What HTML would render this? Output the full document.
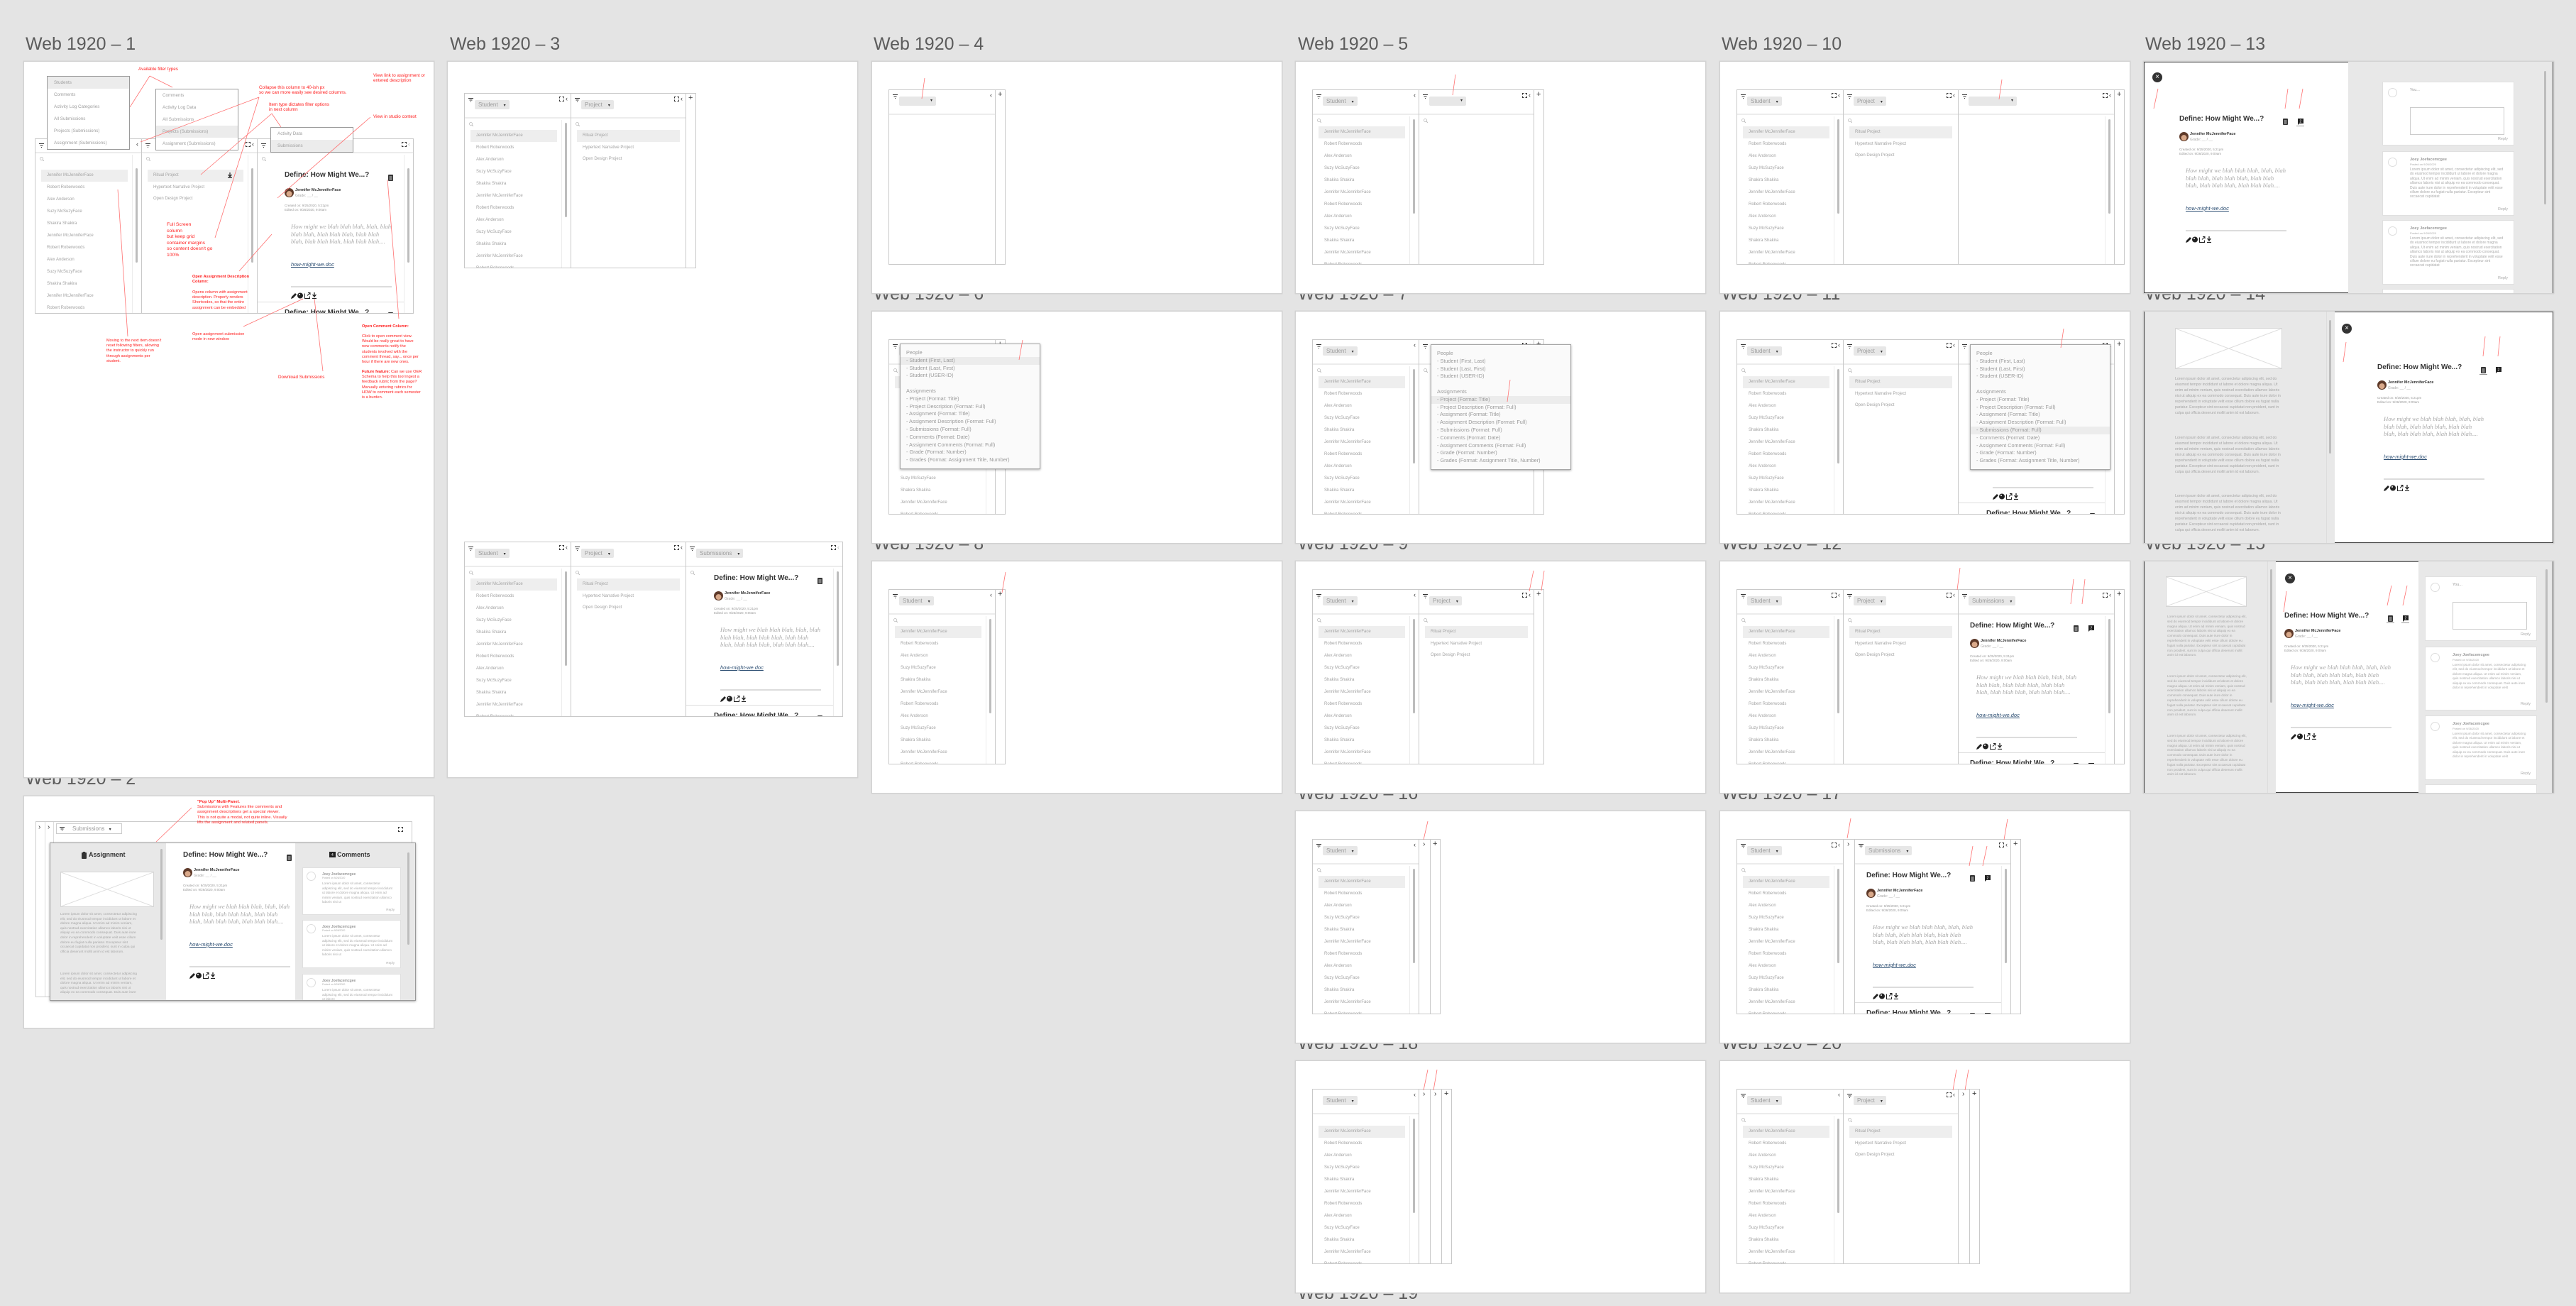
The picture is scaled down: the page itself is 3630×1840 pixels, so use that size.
<!DOCTYPE html>
<html><head><meta charset="utf-8">
<style>
*{margin:0;padding:0;box-sizing:border-box}
body{width:3630px;height:1840px;background:#e4e4e4;position:relative;overflow:hidden;font-family:"Liberation Sans",sans-serif}
.F{position:absolute;background:#fff;width:577px;height:326px;box-shadow:0 0 0 1.5px #d2d2d2;overflow:hidden}
.F.dk{box-shadow:0 0 0 1.5px #d2d2d2,inset 0 0 0 1px #444}
.lb{position:absolute;font-size:25px;color:#5c5c5c;line-height:28px;white-space:nowrap}
.W{position:absolute;left:23px;top:39px;height:247px;display:flex;border:1px solid #c9c9c9;background:#fff}
.C{position:relative;height:100%;border-right:1px solid #c9c9c9;flex:none;overflow:hidden}
.C:last-child{border-right:0}
.H{position:absolute;left:0;right:0;top:0;height:35px;border-bottom:2px solid #ececec}
.fl{position:absolute;left:5px;top:6px}
.P{position:absolute;left:14px;top:9px;height:13px;background:#e7e7e7;color:#9c9c9c;font-size:8px;line-height:13px;padding:0 5px;border-radius:2px;white-space:nowrap}
.P b{font-size:6px;color:#333;margin-left:8px;font-weight:normal}
.ri{position:absolute;right:4px;top:2px;font-size:9px;color:#333;display:flex;gap:2px;align-items:center}
.sr{position:absolute;left:6px;top:40px}
.tr{position:absolute;right:0;top:37px;bottom:0;width:13px;border-left:1px solid #ececec}
.sb{position:absolute;right:5px;top:41px;width:3px;height:133px;background:#bdbdbd;border-radius:2px}
.L{position:absolute;left:8px;right:19px;top:51px}
.i{height:17px;line-height:17px;font-size:6px;color:#a3a3a3;padding-left:8px;white-space:nowrap;overflow:hidden}
.i.s{background:#eee}
.L.p{right:8px}.L.p .i{height:16px;line-height:16px}.L.p .i.s{height:17px;line-height:17px}
.K{width:16px}.ch{position:absolute;top:1px;left:5px;font-size:10px;color:#333}
.Q{width:13px}.pl{position:absolute;top:0;left:3px;font-size:11px;color:#333}
.sm .H{height:20px}.sm .sr{top:25px}.sm .tr{top:22px}.sm .L{top:43px}
.sp{position:absolute;left:0;right:13px;top:229px;height:1px;background:#ddd}
.D{position:absolute;top:0;width:152px;height:247px}
.D>*{position:absolute}
.t{top:45px;left:0;font-weight:bold;font-size:10px;line-height:12px;color:#333;white-space:nowrap}
.d1{top:46px;left:146px}.d2{top:46px;left:167px}
.u1,.u2{top:60px;width:11px;height:1px;background:#999}.u1{left:144px}.u2{left:165px}
.av{top:69px;left:0;width:13px;height:13px;border-radius:50%;background:radial-gradient(circle at 50% 62%,#d9a98a 0 36%,#5e3a2a 40%)}
.nm{top:69px;left:15px;font-size:5.5px;font-weight:bold;color:#333;white-space:nowrap}
.gr{top:77px;left:15px;font-size:5px;color:#aaa;white-space:nowrap}
.cr{top:91px;left:0;font-size:4.5px;color:#999;white-space:nowrap;line-height:6px}
.bt{top:118px;left:9px;width:142px;font-family:"Liberation Serif",serif;font-style:italic;font-size:8.6px;line-height:10.5px;color:#a8a8a8}
.lk{top:172px;left:9px;font-size:7.5px;font-style:italic;color:#2c4e72;text-decoration:underline;white-space:nowrap}
.rl{top:207px;left:9px;width:142px;height:2px;background:#dcdcdc}
.ic{top:212px;left:9px}
.t2{top:239px}
.mn{position:absolute;background:#fff;border:1px solid #9a9a9a;width:117px}
.mn div{height:17px;line-height:17px;font-size:6.3px;color:#9f9f9f;padding-left:9px;white-space:nowrap}
.mn .h{background:#ececec}
.an{position:absolute;color:#ff2020;font-size:6.3px;line-height:7.4px}
.rd{position:absolute;left:0;top:0}
.pm{position:absolute;width:198px;height:177px;background:#fafafa;border:1px solid #a5a5a5;box-shadow:0 1px 3px rgba(0,0,0,.35);padding-top:7px;font-size:7.3px;line-height:10.8px;color:#9a9a9a}
.pm div{padding-left:8px;white-space:nowrap}
.pm .h{background:#ececec}
.gy{position:absolute;top:0;bottom:0;background:#e8e8e8}
.vb{position:absolute;width:3px;background:#bdbdbd;border-radius:2px}
.ph{position:absolute;background:#fff;border:1px solid #d5d5d5}
.ph svg{display:block;width:100%;height:100%}
.lo{position:absolute;color:#a5a5a5}
.xb{position:absolute;width:14px;height:14px;border-radius:50%;background:#333;color:#fff;font-size:10px;line-height:14px;text-align:center}
.cd{position:absolute;background:#fff;border:1px solid #e0e0e0;overflow:hidden}
.cd .cc{position:absolute;left:7px;top:8px;width:13px;height:13px;border:1px solid #ddd;border-radius:50%}
.cd .cn{position:absolute;left:38px;top:8px;font-size:5.5px;font-weight:bold;color:#999;white-space:nowrap}
.cd .cp{position:absolute;left:38px;top:15px;font-size:4px;color:#aaa;white-space:nowrap}
.cd .cx{position:absolute;left:38px;right:12px;top:22px;font-size:5px;line-height:6.4px;color:#aaa;height:52px;overflow:hidden}
.cd .rp{position:absolute;right:8px;bottom:5px;font-size:5.5px;color:#aaa}
.cd .ta{position:absolute;left:38px;top:35px;width:133px;height:39px;border:1px solid #ccc}
</style></head><body>

<!-- LABELS -->
<div class="lb" style="left:36px;top:48px">Web 1920 – 1</div>
<div class="lb" style="left:634px;top:48px">Web 1920 – 3</div>
<div class="lb" style="left:1231px;top:48px">Web 1920 – 4</div>
<div class="lb" style="left:1829px;top:48px">Web 1920 – 5</div>
<div class="lb" style="left:2426px;top:48px">Web 1920 – 10</div>
<div class="lb" style="left:3023px;top:48px">Web 1920 – 13</div>
<div class="lb" style="left:1231px;top:400px">Web 1920 – 6</div>
<div class="lb" style="left:1829px;top:400px">Web 1920 – 7</div>
<div class="lb" style="left:2426px;top:400px">Web 1920 – 11</div>
<div class="lb" style="left:3023px;top:400px">Web 1920 – 14</div>
<div class="lb" style="left:1231px;top:752px">Web 1920 – 8</div>
<div class="lb" style="left:1829px;top:752px">Web 1920 – 9</div>
<div class="lb" style="left:2426px;top:752px">Web 1920 – 12</div>
<div class="lb" style="left:3023px;top:752px">Web 1920 – 15</div>
<div class="lb" style="left:1829px;top:1104px">Web 1920 – 16</div>
<div class="lb" style="left:2426px;top:1104px">Web 1920 – 17</div>
<div class="lb" style="left:1829px;top:1456px">Web 1920 – 18</div>
<div class="lb" style="left:2426px;top:1456px">Web 1920 – 20</div>
<div class="lb" style="left:1829px;top:1808px">Web 1920 – 19</div>
<div class="lb" style="left:36px;top:1083px">Web 1920 – 2</div>

<!-- FRAME 1 -->
<div class="F" style="left:34px;top:87px;height:1008px">
 <div class="W sm" style="left:15px;top:108px">
  <div class="C" style="width:150px"><div class="H"><svg class="fl" width="7" height="6"><path d="M0 .5h7M1.5 3h4M3 5.5h1" stroke="#333"/></svg><span class="ri">‹</span></div><svg class="sr" width="6" height="6"><circle cx="2.5" cy="2.5" r="2" fill="none" stroke="#bbb" stroke-width=".8"/><path d="M4 4l2 2" stroke="#bbb"/></svg><div class="tr"></div><div class="sb"></div>
   <div class="L"><div class="i s">Jennifer McJenniferFace</div><div class="i">Robert Roberwoods</div><div class="i">Alex Anderson</div><div class="i">Suzy McSuzyFace</div><div class="i">Shakira Shakira</div><div class="i">Jennifer McJenniferFace</div><div class="i">Robert Roberwoods</div><div class="i">Alex Anderson</div><div class="i">Suzy McSuzyFace</div><div class="i">Shakira Shakira</div><div class="i">Jennifer McJenniferFace</div><div class="i">Robert Roberwoods</div></div></div>
  <div class="C" style="width:163px"><div class="H"><svg class="fl" width="7" height="6"><path d="M0 .5h7M1.5 3h4M3 5.5h1" stroke="#333"/></svg><span class="ri"><svg width="7" height="7"><path d="M.5 2.5v-2h2M4.5.5h2v2M6.5 4.5v2h-2M2.5 6.5h-2v-2" fill="none" stroke="#333"/></svg>‹</span></div><svg class="sr" width="6" height="6"><circle cx="2.5" cy="2.5" r="2" fill="none" stroke="#bbb" stroke-width=".8"/><path d="M4 4l2 2" stroke="#bbb"/></svg><div class="tr"></div><div class="sb"></div>
   <div class="L p" style="right:19px"><div class="i s">Ritual Project</div><div class="i">Hypertext Narrative Project</div><div class="i">Open Design Project</div></div>
   <svg style="position:absolute;left:121px;top:47px" width="6" height="8"><path d="M3 0v5M.5 3l2.5 3 2.5-3M0 7.5h6" fill="none" stroke="#222" stroke-width="1.2"/></svg></div>
  <div class="C" style="width:219px"><div class="H"><svg class="fl" width="7" height="6"><path d="M0 .5h7M1.5 3h4M3 5.5h1" stroke="#333"/></svg><span class="ri"><svg width="7" height="7"><path d="M.5 2.5v-2h2M4.5.5h2v2M6.5 4.5v2h-2M2.5 6.5h-2v-2" fill="none" stroke="#333"/></svg><span style="color:#bbb">‹</span></span></div><svg class="sr" width="6" height="6"><circle cx="2.5" cy="2.5" r="2" fill="none" stroke="#bbb" stroke-width=".8"/><path d="M4 4l2 2" stroke="#bbb"/></svg><div class="tr"></div><div class="sb"></div><div class="sp"></div>
   <div class="D" style="left:38px"><div class="t">Define: How Might We...?</div><div class="d1"><svg width="7" height="9"><rect width="7" height="9" rx="1" fill="#333"/><path d="M1.5 3h4M1.5 5h4M1.5 7h4" stroke="#fff" stroke-width=".7"/></svg></div><i class="av"></i><div class="nm">Jennifer McJenniferFace</div><div class="gr">Grade: __ / __</div><div class="cr">Created on: 9/25/2020, 5:21pm<br>Edited on: 9/26/2020, 9:00am</div><div class="bt">How might we blah blah blah, blah, blah blah blah, blah blah blah, blah blah blah, blah blah blah, blah blah blah....</div><div class="lk">how-might-we.doc</div><div class="rl"></div><div class="ic"><svg width="40" height="9"><path d="M0 9l1-3 5-5 2 2-5 5z" fill="#222"/><circle cx="13" cy="4.5" r="4" fill="#222"/><circle cx="12" cy="3" r="1" fill="#fff"/><path d="M19.5 1.5v7h7v-3M24 .5h3v3M27 .5l-4 4" fill="none" stroke="#222"/><path d="M33 0v5M30.5 3l2.5 3 2.5-3M30 8.5h6" fill="none" stroke="#222" stroke-width="1.3"/></svg></div><div class="t t2">Define: How Might We...?</div><div class="d1" style="top:240px"><svg width="7" height="9"><rect width="7" height="9" rx="1" fill="#333"/><path d="M1.5 3h4M1.5 5h4M1.5 7h4" stroke="#fff" stroke-width=".7"/></svg></div></div></div>
 </div>
 <div class="mn" style="left:32px;top:20px"><div class="h">Students</div><div>Comments</div><div>Activity Log Categories</div><div>All Submissions</div><div>Projects (Submissions)</div><div>Assignment (Submissions)</div></div>
 <div class="mn" style="left:185px;top:38px"><div>Comments</div><div>Activity Log Data</div><div>All Submissions</div><div class="h">Projects (Submissions)</div><div>Assignment (Submissions)</div></div>
 <div class="mn" style="left:347px;top:92px"><div>Activity Data</div><div class="h">Submissions</div></div>
 <div class="an" style="left:161px;top:7px">Available filter types</div>
 <div class="an" style="left:331px;top:33px">Collapse this column to 40-ish px<br>so we can more easily see desired columns.</div>
 <div class="an" style="left:345px;top:57px">Item type dictates filter options<br>in next column</div>
 <div class="an" style="left:492px;top:16px">View link to assignment or<br>entered description</div>
 <div class="an" style="left:492px;top:74px">View in studio context</div>
 <div class="an" style="left:201px;top:226px;font-size:6.8px;line-height:8.6px">Full Screen<br>column<br>but keep grid<br>container margins<br>so content doesn't go<br>100%</div>
 <div class="an" style="left:237px;top:300px;font-size:5.6px;line-height:7.2px"><b>Open Assignment Description<br>Column:</b></div>
 <div class="an" style="left:237px;top:322px;font-size:5.6px;line-height:7.2px">Opens column with assignment<br>description. Properly renders<br>Shortcodes, so that the entire<br>assignment can be embedded</div>
 <div class="an" style="left:237px;top:381px;font-size:5.6px;line-height:7.2px">Open assignment submission<br>mode in new window</div>
 <div class="an" style="left:116px;top:390px;font-size:5.6px;line-height:7.2px">Moving to the next item doesn't<br>reset following filters, allowing<br>the instructor to quickly run<br>through assignments per<br>student.</div>
 <div class="an" style="left:358px;top:441px">Download Submissions</div>
 <div class="an" style="left:476px;top:370px;font-size:5.6px;line-height:7.2px"><b>Open Comment Column:</b></div>
 <div class="an" style="left:476px;top:384px;font-size:5.6px;line-height:7.2px">Click to open comment view.<br>Would be really great to have<br>new comments notify the<br>students involved with the<br>comment thread, say... once per<br>hour if there are new ones.</div>
 <div class="an" style="left:476px;top:434px;font-size:5.6px;line-height:7.2px"><b>Future feature:</b> Can we use OER<br>Schema to help this tool ingest a<br>feedback rubric from the page?<br>Manually entering rubrics for<br>HOW to comment each semester<br>is a burden.</div>
 <svg class="rd" width="577" height="1008"><g stroke="#ff7070" stroke-width=".8" fill="none"><path d="M177 20L149 64M177 20L209 36M331 50L164 113M331 50L269 248M349 73L249 159M349 73L362 92M488 78L357 192M512 166L528 362M349 243L303 295M132 180L146 387M393 334L309 373M409 334L421 436"/></g></svg>
</div>

<!-- FRAME 3 -->
<div class="F" style="left:631px;top:87px;height:1008px">
 <div class="W" style="top:44px">
  <div class="C" style="width:150px"><div class="H"><svg class="fl" width="7" height="6"><path d="M0 .5h7M1.5 3h4M3 5.5h1" stroke="#333"/></svg><span class="P">Student<b>▾</b></span><span class="ri"><svg width="7" height="7"><path d="M.5 2.5v-2h2M4.5.5h2v2M6.5 4.5v2h-2M2.5 6.5h-2v-2" fill="none" stroke="#333"/></svg>‹</span></div><svg class="sr" width="6" height="6"><circle cx="2.5" cy="2.5" r="2" fill="none" stroke="#bbb" stroke-width=".8"/><path d="M4 4l2 2" stroke="#bbb"/></svg><div class="tr"></div><div class="sb"></div>
   <div class="L"><div class="i s">Jennifer McJenniferFace</div><div class="i">Robert Roberwoods</div><div class="i">Alex Anderson</div><div class="i">Suzy McSuzyFace</div><div class="i">Shakira Shakira</div><div class="i">Jennifer McJenniferFace</div><div class="i">Robert Roberwoods</div><div class="i">Alex Anderson</div><div class="i">Suzy McSuzyFace</div><div class="i">Shakira Shakira</div><div class="i">Jennifer McJenniferFace</div><div class="i">Robert Roberwoods</div></div></div>
  <div class="C" style="width:162px"><div class="H"><svg class="fl" width="7" height="6"><path d="M0 .5h7M1.5 3h4M3 5.5h1" stroke="#333"/></svg><span class="P">Project<b>▾</b></span><span class="ri"><svg width="7" height="7"><path d="M.5 2.5v-2h2M4.5.5h2v2M6.5 4.5v2h-2M2.5 6.5h-2v-2" fill="none" stroke="#333"/></svg>‹</span></div><svg class="sr" width="6" height="6"><circle cx="2.5" cy="2.5" r="2" fill="none" stroke="#bbb" stroke-width=".8"/><path d="M4 4l2 2" stroke="#bbb"/></svg>
   <div class="L p"><div class="i s">Ritual Project</div><div class="i">Hypertext Narrative Project</div><div class="i">Open Design Project</div></div></div>
  <div class="C Q"><span class="pl">+</span></div>
 </div>
 <div class="W" style="top:676px">
  <div class="C" style="width:150px"><div class="H"><svg class="fl" width="7" height="6"><path d="M0 .5h7M1.5 3h4M3 5.5h1" stroke="#333"/></svg><span class="P">Student<b>▾</b></span><span class="ri"><svg width="7" height="7"><path d="M.5 2.5v-2h2M4.5.5h2v2M6.5 4.5v2h-2M2.5 6.5h-2v-2" fill="none" stroke="#333"/></svg>‹</span></div><svg class="sr" width="6" height="6"><circle cx="2.5" cy="2.5" r="2" fill="none" stroke="#bbb" stroke-width=".8"/><path d="M4 4l2 2" stroke="#bbb"/></svg><div class="tr"></div><div class="sb"></div>
   <div class="L"><div class="i s">Jennifer McJenniferFace</div><div class="i">Robert Roberwoods</div><div class="i">Alex Anderson</div><div class="i">Suzy McSuzyFace</div><div class="i">Shakira Shakira</div><div class="i">Jennifer McJenniferFace</div><div class="i">Robert Roberwoods</div><div class="i">Alex Anderson</div><div class="i">Suzy McSuzyFace</div><div class="i">Shakira Shakira</div><div class="i">Jennifer McJenniferFace</div><div class="i">Robert Roberwoods</div></div></div>
  <div class="C" style="width:162px"><div class="H"><svg class="fl" width="7" height="6"><path d="M0 .5h7M1.5 3h4M3 5.5h1" stroke="#333"/></svg><span class="P">Project<b>▾</b></span><span class="ri"><svg width="7" height="7"><path d="M.5 2.5v-2h2M4.5.5h2v2M6.5 4.5v2h-2M2.5 6.5h-2v-2" fill="none" stroke="#333"/></svg>‹</span></div><svg class="sr" width="6" height="6"><circle cx="2.5" cy="2.5" r="2" fill="none" stroke="#bbb" stroke-width=".8"/><path d="M4 4l2 2" stroke="#bbb"/></svg>
   <div class="L p"><div class="i s">Ritual Project</div><div class="i">Hypertext Narrative Project</div><div class="i">Open Design Project</div></div></div>
  <div class="C" style="width:220px"><div class="H"><svg class="fl" width="7" height="6"><path d="M0 .5h7M1.5 3h4M3 5.5h1" stroke="#333"/></svg><span class="P">Submissions<b>▾</b></span><span class="ri"><svg width="7" height="7"><path d="M.5 2.5v-2h2M4.5.5h2v2M6.5 4.5v2h-2M2.5 6.5h-2v-2" fill="none" stroke="#333"/></svg><span style="color:#bbb">‹</span></span></div><svg class="sr" width="6" height="6"><circle cx="2.5" cy="2.5" r="2" fill="none" stroke="#bbb" stroke-width=".8"/><path d="M4 4l2 2" stroke="#bbb"/></svg><div class="tr"></div><div class="sb"></div><div class="sp"></div>
   <div class="D" style="left:39px"><div class="t">Define: How Might We...?</div><div class="d1"><svg width="7" height="9"><rect width="7" height="9" rx="1" fill="#333"/><path d="M1.5 3h4M1.5 5h4M1.5 7h4" stroke="#fff" stroke-width=".7"/></svg></div><i class="av"></i><div class="nm">Jennifer McJenniferFace</div><div class="gr">Grade: __ / __</div><div class="cr">Created on: 9/25/2020, 5:21pm<br>Edited on: 9/26/2020, 9:00am</div><div class="bt">How might we blah blah blah, blah, blah blah blah, blah blah blah, blah blah blah, blah blah blah, blah blah blah....</div><div class="lk">how-might-we.doc</div><div class="rl"></div><div class="ic"><svg width="40" height="9"><path d="M0 9l1-3 5-5 2 2-5 5z" fill="#222"/><circle cx="13" cy="4.5" r="4" fill="#222"/><circle cx="12" cy="3" r="1" fill="#fff"/><path d="M19.5 1.5v7h7v-3M24 .5h3v3M27 .5l-4 4" fill="none" stroke="#222"/><path d="M33 0v5M30.5 3l2.5 3 2.5-3M30 8.5h6" fill="none" stroke="#222" stroke-width="1.3"/></svg></div><div class="t t2">Define: How Might We...?</div><div class="d1" style="top:240px"><svg width="7" height="9"><rect width="7" height="9" rx="1" fill="#333"/><path d="M1.5 3h4M1.5 5h4M1.5 7h4" stroke="#fff" stroke-width=".7"/></svg></div></div></div>
 </div>
</div>

<!-- FRAME 4 -->
<div class="F" style="left:1229px;top:87px">
 <div class="W">
  <div class="C" style="width:150px"><div class="H"><svg class="fl" width="7" height="6"><path d="M0 .5h7M1.5 3h4M3 5.5h1" stroke="#333"/></svg><span class="P" style="width:52px">&nbsp;<b style="position:absolute;right:5px">▾</b></span><span class="ri">‹</span></div></div>
  <div class="C Q"><span class="pl">+</span></div>
 </div>
 <svg class="rd" width="577" height="326"><path d="M74 23L70 52" stroke="#ff7070" stroke-width=".8"/></svg>
</div>

<!-- FRAME 5 -->
<div class="F" style="left:1826px;top:87px">
 <div class="W">
  <div class="C" style="width:150px"><div class="H"><svg class="fl" width="7" height="6"><path d="M0 .5h7M1.5 3h4M3 5.5h1" stroke="#333"/></svg><span class="P">Student<b>▾</b></span><span class="ri">‹</span></div><svg class="sr" width="6" height="6"><circle cx="2.5" cy="2.5" r="2" fill="none" stroke="#bbb" stroke-width=".8"/><path d="M4 4l2 2" stroke="#bbb"/></svg><div class="tr"></div><div class="sb"></div>
   <div class="L"><div class="i s">Jennifer McJenniferFace</div><div class="i">Robert Roberwoods</div><div class="i">Alex Anderson</div><div class="i">Suzy McSuzyFace</div><div class="i">Shakira Shakira</div><div class="i">Jennifer McJenniferFace</div><div class="i">Robert Roberwoods</div><div class="i">Alex Anderson</div><div class="i">Suzy McSuzyFace</div><div class="i">Shakira Shakira</div><div class="i">Jennifer McJenniferFace</div><div class="i">Robert Roberwoods</div></div></div>
  <div class="C" style="width:162px"><div class="H"><svg class="fl" width="7" height="6"><path d="M0 .5h7M1.5 3h4M3 5.5h1" stroke="#333"/></svg><span class="P" style="width:52px">&nbsp;<b style="position:absolute;right:5px">▾</b></span><span class="ri"><svg width="7" height="7"><path d="M.5 2.5v-2h2M4.5.5h2v2M6.5 4.5v2h-2M2.5 6.5h-2v-2" fill="none" stroke="#333"/></svg>‹</span></div><svg class="sr" width="6" height="6"><circle cx="2.5" cy="2.5" r="2" fill="none" stroke="#bbb" stroke-width=".8"/><path d="M4 4l2 2" stroke="#bbb"/></svg></div>
  <div class="C Q"><span class="pl">+</span></div>
 </div>
 <svg class="rd" width="577" height="326"><path d="M225 18L221 47" stroke="#ff7070" stroke-width=".8"/></svg>
</div>

<!-- FRAME 10 -->
<div class="F" style="left:2424px;top:87px">
 <div class="W">
  <div class="C" style="width:150px"><div class="H"><svg class="fl" width="7" height="6"><path d="M0 .5h7M1.5 3h4M3 5.5h1" stroke="#333"/></svg><span class="P">Student<b>▾</b></span><span class="ri"><svg width="7" height="7"><path d="M.5 2.5v-2h2M4.5.5h2v2M6.5 4.5v2h-2M2.5 6.5h-2v-2" fill="none" stroke="#333"/></svg>‹</span></div><svg class="sr" width="6" height="6"><circle cx="2.5" cy="2.5" r="2" fill="none" stroke="#bbb" stroke-width=".8"/><path d="M4 4l2 2" stroke="#bbb"/></svg><div class="tr"></div><div class="sb"></div>
   <div class="L"><div class="i s">Jennifer McJenniferFace</div><div class="i">Robert Roberwoods</div><div class="i">Alex Anderson</div><div class="i">Suzy McSuzyFace</div><div class="i">Shakira Shakira</div><div class="i">Jennifer McJenniferFace</div><div class="i">Robert Roberwoods</div><div class="i">Alex Anderson</div><div class="i">Suzy McSuzyFace</div><div class="i">Shakira Shakira</div><div class="i">Jennifer McJenniferFace</div><div class="i">Robert Roberwoods</div></div></div>
  <div class="C" style="width:162px"><div class="H"><svg class="fl" width="7" height="6"><path d="M0 .5h7M1.5 3h4M3 5.5h1" stroke="#333"/></svg><span class="P">Project<b>▾</b></span><span class="ri"><svg width="7" height="7"><path d="M.5 2.5v-2h2M4.5.5h2v2M6.5 4.5v2h-2M2.5 6.5h-2v-2" fill="none" stroke="#333"/></svg>‹</span></div><svg class="sr" width="6" height="6"><circle cx="2.5" cy="2.5" r="2" fill="none" stroke="#bbb" stroke-width=".8"/><path d="M4 4l2 2" stroke="#bbb"/></svg>
   <div class="L p"><div class="i s">Ritual Project</div><div class="i">Hypertext Narrative Project</div><div class="i">Open Design Project</div></div></div>
  <div class="C" style="width:220px"><div class="H"><svg class="fl" width="7" height="6"><path d="M0 .5h7M1.5 3h4M3 5.5h1" stroke="#333"/></svg><span class="P" style="width:68px">&nbsp;<b style="position:absolute;right:5px">▾</b></span><span class="ri"><svg width="7" height="7"><path d="M.5 2.5v-2h2M4.5.5h2v2M6.5 4.5v2h-2M2.5 6.5h-2v-2" fill="none" stroke="#333"/></svg>‹</span></div><div class="tr"></div><div class="sb"></div></div>
  <div class="C Q"><span class="pl">+</span></div>
 </div>
 <svg class="rd" width="577" height="326"><path d="M397 25L393 53" stroke="#ff7070" stroke-width=".8"/></svg>
</div>

<!-- FRAME 13 -->
<div class="F dk" style="left:3021px;top:87px">
 <div class="gy" style="left:288px;right:1px"></div>
 <div class="xb" style="left:12px;top:15px">×</div>
 <div class="D" style="left:50px;top:30px"><div class="t">Define: How Might We...?</div><div class="d1"><svg width="7" height="9"><rect width="7" height="9" rx="1" fill="#333"/><path d="M1.5 3h4M1.5 5h4M1.5 7h4" stroke="#fff" stroke-width=".7"/></svg></div><div class="d2"><svg width="8" height="9"><path d="M0 0h8v7H2L0 9z" fill="#222"/><text x="2.5" y="5.5" font-size="5" fill="#fff" font-family="Liberation Sans">2</text></svg></div><div class="u2"></div><i class="av"></i><div class="nm">Jennifer McJenniferFace</div><div class="gr">Grade: __ / __</div><div class="cr">Created on: 9/25/2020, 5:21pm<br>Edited on: 9/26/2020, 9:00am</div><div class="bt">How might we blah blah blah, blah, blah blah blah, blah blah blah, blah blah blah, blah blah blah, blah blah blah....</div><div class="lk">how-might-we.doc</div><div class="rl"></div><div class="ic"><svg width="40" height="9"><path d="M0 9l1-3 5-5 2 2-5 5z" fill="#222"/><circle cx="13" cy="4.5" r="4" fill="#222"/><circle cx="12" cy="3" r="1" fill="#fff"/><path d="M19.5 1.5v7h7v-3M24 .5h3v3M27 .5l-4 4" fill="none" stroke="#222"/><path d="M33 0v5M30.5 3l2.5 3 2.5-3M30 8.5h6" fill="none" stroke="#222" stroke-width="1.3"/></svg></div></div>
 <div class="cd" style="left:336px;top:28px;width:186px;height:90px"><i class="cc"></i><span class="cn" style="font-weight:normal">You...</span><div class="ta"></div><span class="rp">Reply</span></div>
 <div class="cd" style="left:336px;top:126px;width:186px;height:91px"><i class="cc"></i><b class="cn">Joey Joefacemcgee</b><span class="cp">Posted on 9/26/2020</span><p class="cx">Lorem ipsum dolor sit amet, consectetur adipiscing elit, sed do eiusmod tempor incididunt ut labore et dolore magna aliqua. Ut enim ad minim veniam, quis nostrud exercitation ullamco laboris nisi ut aliquip ex ea commodo consequat. Duis aute irure dolor in reprehenderit in voluptate velit esse cillum dolore eu fugiat nulla pariatur. Excepteur sint occaecat cupidatat</p><span class="rp">Reply</span></div>
 <div class="cd" style="left:336px;top:223px;width:186px;height:91px"><i class="cc"></i><b class="cn">Joey Joefacemcgee</b><span class="cp">Posted on 9/26/2020</span><p class="cx">Lorem ipsum dolor sit amet, consectetur adipiscing elit, sed do eiusmod tempor incididunt ut labore et dolore magna aliqua. Ut enim ad minim veniam, quis nostrud exercitation ullamco laboris nisi ut aliquip ex ea commodo consequat. Duis aute irure dolor in reprehenderit in voluptate velit esse cillum dolore eu fugiat nulla pariatur. Excepteur sint occaecat cupidatat</p><span class="rp">Reply</span></div>
 <div class="cd" style="left:336px;top:320px;width:186px;height:20px"></div>
 <div class="vb" style="left:564px;top:13px;height:188px"></div>
 <svg class="rd" width="577" height="326"><path d="M20 38L14 66M203 38L199 66M224 38L219 66" stroke="#ff7070" stroke-width=".8"/></svg>
</div>

<!-- FRAME 6 -->
<div class="F" style="left:1229px;top:439px">
 <div class="W">
  <div class="C" style="width:150px"><div class="H"><svg class="fl" width="7" height="6"><path d="M0 .5h7M1.5 3h4M3 5.5h1" stroke="#333"/></svg><span class="P">Student<b>▾</b></span><span class="ri">‹</span></div><svg class="sr" width="6" height="6"><circle cx="2.5" cy="2.5" r="2" fill="none" stroke="#bbb" stroke-width=".8"/><path d="M4 4l2 2" stroke="#bbb"/></svg><div class="tr"></div><div class="sb"></div>
   <div class="L"><div class="i s">Jennifer McJenniferFace</div><div class="i">Robert Roberwoods</div><div class="i">Alex Anderson</div><div class="i">Suzy McSuzyFace</div><div class="i">Shakira Shakira</div><div class="i">Jennifer McJenniferFace</div><div class="i">Robert Roberwoods</div><div class="i">Alex Anderson</div><div class="i">Suzy McSuzyFace</div><div class="i">Shakira Shakira</div><div class="i">Jennifer McJenniferFace</div><div class="i">Robert Roberwoods</div></div></div>
  <div class="C Q"><span class="pl">+</span></div>
 </div>
 <div class="pm" style="left:39px;top:45px"><div>People</div><div class="h">- Student (First, Last)</div><div>- Student (Last, First)</div><div>- Student (USER-ID)</div><div>&nbsp;</div><div>Assignments</div><div>- Project (Format: Title)</div><div>- Project Description (Format: Full)</div><div>- Assignment (Format: Title)</div><div>- Assignment Description (Format: Full)</div><div>- Submissions (Format: Full)</div><div>- Comments (Format: Date)</div><div>- Assignment Comments (Format: Full)</div><div>- Grade (Format: Number)</div><div>- Grades (Format: Assignment Title, Number)</div></div>
 <svg class="rd" width="577" height="326"><path d="M212 40L207 68" stroke="#ff7070" stroke-width=".8"/></svg>
</div>

<!-- FRAME 7 -->
<div class="F" style="left:1826px;top:439px">
 <div class="W">
  <div class="C" style="width:150px"><div class="H"><svg class="fl" width="7" height="6"><path d="M0 .5h7M1.5 3h4M3 5.5h1" stroke="#333"/></svg><span class="P">Student<b>▾</b></span><span class="ri">‹</span></div><svg class="sr" width="6" height="6"><circle cx="2.5" cy="2.5" r="2" fill="none" stroke="#bbb" stroke-width=".8"/><path d="M4 4l2 2" stroke="#bbb"/></svg><div class="tr"></div><div class="sb"></div>
   <div class="L"><div class="i s">Jennifer McJenniferFace</div><div class="i">Robert Roberwoods</div><div class="i">Alex Anderson</div><div class="i">Suzy McSuzyFace</div><div class="i">Shakira Shakira</div><div class="i">Jennifer McJenniferFace</div><div class="i">Robert Roberwoods</div><div class="i">Alex Anderson</div><div class="i">Suzy McSuzyFace</div><div class="i">Shakira Shakira</div><div class="i">Jennifer McJenniferFace</div><div class="i">Robert Roberwoods</div></div></div>
  <div class="C" style="width:162px"><div class="H"><svg class="fl" width="7" height="6"><path d="M0 .5h7M1.5 3h4M3 5.5h1" stroke="#333"/></svg><span class="ri"><svg width="7" height="7"><path d="M.5 2.5v-2h2M4.5.5h2v2M6.5 4.5v2h-2M2.5 6.5h-2v-2" fill="none" stroke="#333"/></svg>‹</span></div><svg class="sr" width="6" height="6"><circle cx="2.5" cy="2.5" r="2" fill="none" stroke="#bbb" stroke-width=".8"/><path d="M4 4l2 2" stroke="#bbb"/></svg></div>
  <div class="C Q"><span class="pl">+</span></div>
 </div>
 <div class="pm" style="left:190px;top:46px"><div>People</div><div>- Student (First, Last)</div><div>- Student (Last, First)</div><div>- Student (USER-ID)</div><div>&nbsp;</div><div>Assignments</div><div class="h">- Project (Format: Title)</div><div>- Project Description (Format: Full)</div><div>- Assignment (Format: Title)</div><div>- Assignment Description (Format: Full)</div><div>- Submissions (Format: Full)</div><div>- Comments (Format: Date)</div><div>- Assignment Comments (Format: Full)</div><div>- Grade (Format: Number)</div><div>- Grades (Format: Assignment Title, Number)</div></div>
 <svg class="rd" width="577" height="326"><path d="M302 96L298 127" stroke="#ff7070" stroke-width=".8"/></svg>
</div>

<!-- FRAME 11 -->
<div class="F" style="left:2424px;top:439px">
 <div class="W">
  <div class="C" style="width:150px"><div class="H"><svg class="fl" width="7" height="6"><path d="M0 .5h7M1.5 3h4M3 5.5h1" stroke="#333"/></svg><span class="P">Student<b>▾</b></span><span class="ri"><svg width="7" height="7"><path d="M.5 2.5v-2h2M4.5.5h2v2M6.5 4.5v2h-2M2.5 6.5h-2v-2" fill="none" stroke="#333"/></svg>‹</span></div><svg class="sr" width="6" height="6"><circle cx="2.5" cy="2.5" r="2" fill="none" stroke="#bbb" stroke-width=".8"/><path d="M4 4l2 2" stroke="#bbb"/></svg><div class="tr"></div><div class="sb"></div>
   <div class="L"><div class="i s">Jennifer McJenniferFace</div><div class="i">Robert Roberwoods</div><div class="i">Alex Anderson</div><div class="i">Suzy McSuzyFace</div><div class="i">Shakira Shakira</div><div class="i">Jennifer McJenniferFace</div><div class="i">Robert Roberwoods</div><div class="i">Alex Anderson</div><div class="i">Suzy McSuzyFace</div><div class="i">Shakira Shakira</div><div class="i">Jennifer McJenniferFace</div><div class="i">Robert Roberwoods</div></div></div>
  <div class="C" style="width:162px"><div class="H"><svg class="fl" width="7" height="6"><path d="M0 .5h7M1.5 3h4M3 5.5h1" stroke="#333"/></svg><span class="P">Project<b>▾</b></span><span class="ri"><svg width="7" height="7"><path d="M.5 2.5v-2h2M4.5.5h2v2M6.5 4.5v2h-2M2.5 6.5h-2v-2" fill="none" stroke="#333"/></svg>‹</span></div><svg class="sr" width="6" height="6"><circle cx="2.5" cy="2.5" r="2" fill="none" stroke="#bbb" stroke-width=".8"/><path d="M4 4l2 2" stroke="#bbb"/></svg>
   <div class="L p"><div class="i s">Ritual Project</div><div class="i">Hypertext Narrative Project</div><div class="i">Open Design Project</div></div></div>
  <div class="C" style="width:220px"><div class="H"><svg class="fl" width="7" height="6"><path d="M0 .5h7M1.5 3h4M3 5.5h1" stroke="#333"/></svg><span class="ri"><svg width="7" height="7"><path d="M.5 2.5v-2h2M4.5.5h2v2M6.5 4.5v2h-2M2.5 6.5h-2v-2" fill="none" stroke="#333"/></svg>‹</span></div><div class="tr"></div><div class="sb"></div><div class="sp"></div>
   <div class="D" style="left:39px"><div class="t">Define: How Might We...?</div><i class="av"></i><div class="bt">How might we blah blah blah, blah, blah blah blah, blah blah blah, blah blah blah, blah blah blah, blah blah blah....</div><div class="lk">how-might-we.doc</div><div class="rl"></div><div class="ic"><svg width="40" height="9"><path d="M0 9l1-3 5-5 2 2-5 5z" fill="#222"/><circle cx="13" cy="4.5" r="4" fill="#222"/><circle cx="12" cy="3" r="1" fill="#fff"/><path d="M19.5 1.5v7h7v-3M24 .5h3v3M27 .5l-4 4" fill="none" stroke="#222"/><path d="M33 0v5M30.5 3l2.5 3 2.5-3M30 8.5h6" fill="none" stroke="#222" stroke-width="1.3"/></svg></div><div class="t t2">Define: How Might We...?</div><div class="d1" style="top:240px"><svg width="7" height="9"><rect width="7" height="9" rx="1" fill="#333"/><path d="M1.5 3h4M1.5 5h4M1.5 7h4" stroke="#fff" stroke-width=".7"/></svg></div></div></div>
  <div class="C Q"><span class="pl">+</span></div>
 </div>
 <div class="pm" style="left:352px;top:46px"><div>People</div><div>- Student (First, Last)</div><div>- Student (Last, First)</div><div>- Student (USER-ID)</div><div>&nbsp;</div><div>Assignments</div><div>- Project (Format: Title)</div><div>- Project Description (Format: Full)</div><div>- Assignment (Format: Title)</div><div>- Assignment Description (Format: Full)</div><div class="h">- Submissions (Format: Full)</div><div>- Comments (Format: Date)</div><div>- Assignment Comments (Format: Full)</div><div>- Grade (Format: Number)</div><div>- Grades (Format: Assignment Title, Number)</div></div>
 <svg class="rd" width="577" height="326"><path d="M484 24L480 51" stroke="#ff7070" stroke-width=".8"/></svg>
</div>

<!-- FRAME 14 -->
<div class="F dk" style="left:3021px;top:439px">
 <div class="gy" style="left:1px;width:268px"></div>
 <div style="position:absolute;left:257px;top:0;bottom:0;width:1px;background:#ddd"></div>
 <div class="vb" style="left:261px;top:12px;height:188px"></div>
 <div class="ph" style="left:44px;top:23px;width:151px;height:58px"><svg viewBox="0 0 100 100" preserveAspectRatio="none"><path d="M0 0L100 100M100 0L0 100" stroke="#ddd" vector-effect="non-scaling-stroke" fill="none"/></svg></div>
 <p class="lo" style="left:44px;top:91px;width:151px;font-size:5.2px;line-height:8px">Lorem ipsum dolor sit amet, consectetur adipiscing elit, sed do eiusmod tempor incididunt ut labore et dolore magna aliqua. Ut enim ad minim veniam, quis nostrud exercitation ullamco laboris nisi ut aliquip ex ea commodo consequat. Duis aute irure dolor in reprehenderit in voluptate velit esse cillum dolore eu fugiat nulla pariatur. Excepteur sint occaecat cupidatat non proident, sunt in culpa qui officia deserunt mollit anim id est laborum.</p>
 <p class="lo" style="left:44px;top:174px;width:151px;font-size:5.2px;line-height:8px">Lorem ipsum dolor sit amet, consectetur adipiscing elit, sed do eiusmod tempor incididunt ut labore et dolore magna aliqua. Ut enim ad minim veniam, quis nostrud exercitation ullamco laboris nisi ut aliquip ex ea commodo consequat. Duis aute irure dolor in reprehenderit in voluptate velit esse cillum dolore eu fugiat nulla pariatur. Excepteur sint occaecat cupidatat non proident, sunt in culpa qui officia deserunt mollit anim id est laborum.</p>
 <p class="lo" style="left:44px;top:256px;width:151px;font-size:5.2px;line-height:8px">Lorem ipsum dolor sit amet, consectetur adipiscing elit, sed do eiusmod tempor incididunt ut labore et dolore magna aliqua. Ut enim ad minim veniam, quis nostrud exercitation ullamco laboris nisi ut aliquip ex ea commodo consequat. Duis aute irure dolor in reprehenderit in voluptate velit esse cillum dolore eu fugiat nulla pariatur. Excepteur sint occaecat cupidatat non proident, sunt in culpa qui officia deserunt mollit anim id est laborum.</p>
 <div class="xb" style="left:279px;top:17px">×</div>
 <div class="D" style="left:329px;top:28px"><div class="t">Define: How Might We...?</div><div class="d1"><svg width="7" height="9"><rect width="7" height="9" rx="1" fill="#333"/><path d="M1.5 3h4M1.5 5h4M1.5 7h4" stroke="#fff" stroke-width=".7"/></svg></div><div class="u1"></div><div class="d2"><svg width="8" height="9"><path d="M0 0h8v7H2L0 9z" fill="#222"/><text x="2.5" y="5.5" font-size="5" fill="#fff" font-family="Liberation Sans">2</text></svg></div><i class="av"></i><div class="nm">Jennifer McJenniferFace</div><div class="gr">Grade: __ / __</div><div class="cr">Created on: 9/25/2020, 5:21pm<br>Edited on: 9/26/2020, 9:00am</div><div class="bt">How might we blah blah blah, blah, blah blah blah, blah blah blah, blah blah blah, blah blah blah, blah blah blah....</div><div class="lk">how-might-we.doc</div><div class="rl"></div><div class="ic"><svg width="40" height="9"><path d="M0 9l1-3 5-5 2 2-5 5z" fill="#222"/><circle cx="13" cy="4.5" r="4" fill="#222"/><circle cx="12" cy="3" r="1" fill="#fff"/><path d="M19.5 1.5v7h7v-3M24 .5h3v3M27 .5l-4 4" fill="none" stroke="#222"/><path d="M33 0v5M30.5 3l2.5 3 2.5-3M30 8.5h6" fill="none" stroke="#222" stroke-width="1.3"/></svg></div></div>
 <svg class="rd" width="577" height="326"><path d="M285 43L281 71M481 35L478 63M502 35L499 63" stroke="#ff7070" stroke-width=".8"/></svg>
</div>

<!-- FRAME 8 -->
<div class="F" style="left:1229px;top:791px">
 <div class="W">
  <div class="C" style="width:150px"><div class="H"><svg class="fl" width="7" height="6"><path d="M0 .5h7M1.5 3h4M3 5.5h1" stroke="#333"/></svg><span class="P">Student<b>▾</b></span><span class="ri">‹</span></div><svg class="sr" width="6" height="6"><circle cx="2.5" cy="2.5" r="2" fill="none" stroke="#bbb" stroke-width=".8"/><path d="M4 4l2 2" stroke="#bbb"/></svg><div class="tr"></div><div class="sb"></div>
   <div class="L"><div class="i s">Jennifer McJenniferFace</div><div class="i">Robert Roberwoods</div><div class="i">Alex Anderson</div><div class="i">Suzy McSuzyFace</div><div class="i">Shakira Shakira</div><div class="i">Jennifer McJenniferFace</div><div class="i">Robert Roberwoods</div><div class="i">Alex Anderson</div><div class="i">Suzy McSuzyFace</div><div class="i">Shakira Shakira</div><div class="i">Jennifer McJenniferFace</div><div class="i">Robert Roberwoods</div></div></div>
  <div class="C Q"><span class="pl">+</span></div>
 </div>
 <svg class="rd" width="577" height="326"><path d="M188 15L183 44" stroke="#ff7070" stroke-width=".8"/></svg>
</div>

<!-- FRAME 9 -->
<div class="F" style="left:1826px;top:791px">
 <div class="W">
  <div class="C" style="width:150px"><div class="H"><svg class="fl" width="7" height="6"><path d="M0 .5h7M1.5 3h4M3 5.5h1" stroke="#333"/></svg><span class="P">Student<b>▾</b></span><span class="ri">‹</span></div><svg class="sr" width="6" height="6"><circle cx="2.5" cy="2.5" r="2" fill="none" stroke="#bbb" stroke-width=".8"/><path d="M4 4l2 2" stroke="#bbb"/></svg><div class="tr"></div><div class="sb"></div>
   <div class="L"><div class="i s">Jennifer McJenniferFace</div><div class="i">Robert Roberwoods</div><div class="i">Alex Anderson</div><div class="i">Suzy McSuzyFace</div><div class="i">Shakira Shakira</div><div class="i">Jennifer McJenniferFace</div><div class="i">Robert Roberwoods</div><div class="i">Alex Anderson</div><div class="i">Suzy McSuzyFace</div><div class="i">Shakira Shakira</div><div class="i">Jennifer McJenniferFace</div><div class="i">Robert Roberwoods</div></div></div>
  <div class="C" style="width:162px"><div class="H"><svg class="fl" width="7" height="6"><path d="M0 .5h7M1.5 3h4M3 5.5h1" stroke="#333"/></svg><span class="P">Project<b>▾</b></span><span class="ri"><svg width="7" height="7"><path d="M.5 2.5v-2h2M4.5.5h2v2M6.5 4.5v2h-2M2.5 6.5h-2v-2" fill="none" stroke="#333"/></svg>‹</span></div><svg class="sr" width="6" height="6"><circle cx="2.5" cy="2.5" r="2" fill="none" stroke="#bbb" stroke-width=".8"/><path d="M4 4l2 2" stroke="#bbb"/></svg>
   <div class="L p"><div class="i s">Ritual Project</div><div class="i">Hypertext Narrative Project</div><div class="i">Open Design Project</div></div></div>
  <div class="C Q"><span class="pl">+</span></div>
 </div>
 <svg class="rd" width="577" height="326"><path d="M335 13L329 42M350 13L346 41" stroke="#ff7070" stroke-width=".8"/></svg>
</div>

<!-- FRAME 12 -->
<div class="F" style="left:2424px;top:791px">
 <div class="W">
  <div class="C" style="width:150px"><div class="H"><svg class="fl" width="7" height="6"><path d="M0 .5h7M1.5 3h4M3 5.5h1" stroke="#333"/></svg><span class="P">Student<b>▾</b></span><span class="ri"><svg width="7" height="7"><path d="M.5 2.5v-2h2M4.5.5h2v2M6.5 4.5v2h-2M2.5 6.5h-2v-2" fill="none" stroke="#333"/></svg>‹</span></div><svg class="sr" width="6" height="6"><circle cx="2.5" cy="2.5" r="2" fill="none" stroke="#bbb" stroke-width=".8"/><path d="M4 4l2 2" stroke="#bbb"/></svg><div class="tr"></div><div class="sb"></div>
   <div class="L"><div class="i s">Jennifer McJenniferFace</div><div class="i">Robert Roberwoods</div><div class="i">Alex Anderson</div><div class="i">Suzy McSuzyFace</div><div class="i">Shakira Shakira</div><div class="i">Jennifer McJenniferFace</div><div class="i">Robert Roberwoods</div><div class="i">Alex Anderson</div><div class="i">Suzy McSuzyFace</div><div class="i">Shakira Shakira</div><div class="i">Jennifer McJenniferFace</div><div class="i">Robert Roberwoods</div></div></div>
  <div class="C" style="width:162px"><div class="H"><svg class="fl" width="7" height="6"><path d="M0 .5h7M1.5 3h4M3 5.5h1" stroke="#333"/></svg><span class="P">Project<b>▾</b></span><span class="ri"><svg width="7" height="7"><path d="M.5 2.5v-2h2M4.5.5h2v2M6.5 4.5v2h-2M2.5 6.5h-2v-2" fill="none" stroke="#333"/></svg>‹</span></div><svg class="sr" width="6" height="6"><circle cx="2.5" cy="2.5" r="2" fill="none" stroke="#bbb" stroke-width=".8"/><path d="M4 4l2 2" stroke="#bbb"/></svg>
   <div class="L p"><div class="i s">Ritual Project</div><div class="i">Hypertext Narrative Project</div><div class="i">Open Design Project</div></div></div>
  <div class="C" style="width:220px"><div class="H"><svg class="fl" width="7" height="6"><path d="M0 .5h7M1.5 3h4M3 5.5h1" stroke="#333"/></svg><span class="P">Submissions<b>▾</b></span><span class="ri"><svg width="7" height="7"><path d="M.5 2.5v-2h2M4.5.5h2v2M6.5 4.5v2h-2M2.5 6.5h-2v-2" fill="none" stroke="#333"/></svg>‹</span></div><div class="tr"></div><div class="sb"></div><div class="sp"></div>
   <div class="D" style="left:16px"><div class="t">Define: How Might We...?</div><div class="d1"><svg width="7" height="9"><rect width="7" height="9" rx="1" fill="#333"/><path d="M1.5 3h4M1.5 5h4M1.5 7h4" stroke="#fff" stroke-width=".7"/></svg></div><div class="d2"><svg width="8" height="9"><path d="M0 0h8v7H2L0 9z" fill="#222"/><text x="2.5" y="5.5" font-size="5" fill="#fff" font-family="Liberation Sans">2</text></svg></div><i class="av"></i><div class="nm">Jennifer McJenniferFace</div><div class="gr">Grade: __ / __</div><div class="cr">Created on: 9/25/2020, 5:21pm<br>Edited on: 9/26/2020, 9:00am</div><div class="bt">How might we blah blah blah, blah, blah blah blah, blah blah blah, blah blah blah, blah blah blah, blah blah blah....</div><div class="lk">how-might-we.doc</div><div class="rl"></div><div class="ic"><svg width="40" height="9"><path d="M0 9l1-3 5-5 2 2-5 5z" fill="#222"/><circle cx="13" cy="4.5" r="4" fill="#222"/><circle cx="12" cy="3" r="1" fill="#fff"/><path d="M19.5 1.5v7h7v-3M24 .5h3v3M27 .5l-4 4" fill="none" stroke="#222"/><path d="M33 0v5M30.5 3l2.5 3 2.5-3M30 8.5h6" fill="none" stroke="#222" stroke-width="1.3"/></svg></div><div class="t t2">Define: How Might We...?</div><div class="d1" style="top:240px"><svg width="7" height="9"><rect width="7" height="9" rx="1" fill="#333"/><path d="M1.5 3h4M1.5 5h4M1.5 7h4" stroke="#fff" stroke-width=".7"/></svg></div><div class="d2" style="top:240px"><svg width="8" height="9"><path d="M0 0h8v7H2L0 9z" fill="#222"/></svg></div></div></div>
  <div class="C Q"><span class="pl">+</span></div>
 </div>
 <svg class="rd" width="577" height="326"><path d="M338 9L334 40M498 25L494 60M514 25L510 60" stroke="#ff7070" stroke-width=".8"/></svg>
</div>

<!-- FRAME 15 -->
<div class="F dk" style="left:3021px;top:791px">
 <div class="gy" style="left:1px;width:185px"></div>
 <div class="gy" style="left:387px;right:1px"></div>
 <div style="position:absolute;left:174px;top:0;bottom:0;width:1px;background:#ddd"></div>
 <div class="vb" style="left:178px;top:11px;height:188px"></div>
 <div class="vb" style="left:566px;top:11px;height:188px"></div>
 <div class="ph" style="left:31px;top:21px;width:114px;height:43px"><svg viewBox="0 0 100 100" preserveAspectRatio="none"><path d="M0 0L100 100M100 0L0 100" stroke="#ddd" vector-effect="non-scaling-stroke" fill="none"/></svg></div>
 <p class="lo" style="left:33px;top:75px;width:112px;font-size:4.6px;line-height:6.8px">Lorem ipsum dolor sit amet, consectetur adipiscing elit, sed do eiusmod tempor incididunt ut labore et dolore magna aliqua. Ut enim ad minim veniam, quis nostrud exercitation ullamco laboris nisi ut aliquip ex ea commodo consequat. Duis aute irure dolor in reprehenderit in voluptate velit esse cillum dolore eu fugiat nulla pariatur. Excepteur sint occaecat cupidatat non proident, sunt in culpa qui officia deserunt mollit anim id est laborum.</p>
 <p class="lo" style="left:33px;top:159px;width:112px;font-size:4.6px;line-height:6.8px">Lorem ipsum dolor sit amet, consectetur adipiscing elit, sed do eiusmod tempor incididunt ut labore et dolore magna aliqua. Ut enim ad minim veniam, quis nostrud exercitation ullamco laboris nisi ut aliquip ex ea commodo consequat. Duis aute irure dolor in reprehenderit in voluptate velit esse cillum dolore eu fugiat nulla pariatur. Excepteur sint occaecat cupidatat non proident, sunt in culpa qui officia deserunt mollit anim id est laborum.</p>
 <p class="lo" style="left:33px;top:243px;width:112px;font-size:4.6px;line-height:6.8px">Lorem ipsum dolor sit amet, consectetur adipiscing elit, sed do eiusmod tempor incididunt ut labore et dolore magna aliqua. Ut enim ad minim veniam, quis nostrud exercitation ullamco laboris nisi ut aliquip ex ea commodo consequat. Duis aute irure dolor in reprehenderit in voluptate velit esse cillum dolore eu fugiat nulla pariatur. Excepteur sint occaecat cupidatat non proident, sunt in culpa qui officia deserunt mollit anim id est laborum.</p>
 <div class="xb" style="left:199px;top:17px">×</div>
 <div class="D" style="left:198px;top:26px"><div class="t">Define: How Might We...?</div><div class="d1"><svg width="7" height="9"><rect width="7" height="9" rx="1" fill="#333"/><path d="M1.5 3h4M1.5 5h4M1.5 7h4" stroke="#fff" stroke-width=".7"/></svg></div><div class="u1"></div><div class="d2"><svg width="8" height="9"><path d="M0 0h8v7H2L0 9z" fill="#222"/><text x="2.5" y="5.5" font-size="5" fill="#fff" font-family="Liberation Sans">2</text></svg></div><div class="u2"></div><i class="av"></i><div class="nm">Jennifer McJenniferFace</div><div class="gr">Grade: __ / __</div><div class="cr">Created on: 9/25/2020, 5:21pm<br>Edited on: 9/26/2020, 9:00am</div><div class="bt">How might we blah blah blah, blah, blah blah blah, blah blah blah, blah blah blah, blah blah blah, blah blah blah....</div><div class="lk">how-might-we.doc</div><div class="rl"></div><div class="ic"><svg width="40" height="9"><path d="M0 9l1-3 5-5 2 2-5 5z" fill="#222"/><circle cx="13" cy="4.5" r="4" fill="#222"/><circle cx="12" cy="3" r="1" fill="#fff"/><path d="M19.5 1.5v7h7v-3M24 .5h3v3M27 .5l-4 4" fill="none" stroke="#222"/><path d="M33 0v5M30.5 3l2.5 3 2.5-3M30 8.5h6" fill="none" stroke="#222" stroke-width="1.3"/></svg></div></div>
 <div class="cd" style="left:396px;top:21px;width:158px;height:91px"><i class="cc"></i><span class="cn" style="font-weight:normal">You...</span><div class="ta" style="width:105px"></div><span class="rp">Reply</span></div>
 <div class="cd" style="left:396px;top:120px;width:158px;height:90px"><i class="cc"></i><b class="cn">Joey Joefacemcgee</b><span class="cp">Posted on 9/26/2020</span><p class="cx" style="font-size:4.6px">Lorem ipsum dolor sit amet, consectetur adipiscing elit, sed do eiusmod tempor incididunt ut labore et dolore magna aliqua. Ut enim ad minim veniam, quis nostrud exercitation ullamco laboris nisi ut aliquip ex ea commodo consequat. Duis aute irure dolor in reprehenderit in voluptate velit</p><span class="rp">Reply</span></div>
 <div class="cd" style="left:396px;top:217px;width:158px;height:91px"><i class="cc"></i><b class="cn">Joey Joefacemcgee</b><span class="cp">Posted on 9/26/2020</span><p class="cx" style="font-size:4.6px">Lorem ipsum dolor sit amet, consectetur adipiscing elit, sed do eiusmod tempor incididunt ut labore et dolore magna aliqua. Ut enim ad minim veniam, quis nostrud exercitation ullamco laboris nisi ut aliquip ex ea commodo consequat. Duis aute irure dolor in reprehenderit in voluptate velit</p><span class="rp">Reply</span></div>
 <div class="cd" style="left:396px;top:314px;width:158px;height:20px"></div>
 <svg class="rd" width="577" height="326"><path d="M201 42L197 71M349 34L343 62M371 34L365 62" stroke="#ff7070" stroke-width=".8"/></svg>
</div>

<!-- FRAME 16 -->
<div class="F" style="left:1826px;top:1143px">
 <div class="W">
  <div class="C" style="width:150px"><div class="H"><svg class="fl" width="7" height="6"><path d="M0 .5h7M1.5 3h4M3 5.5h1" stroke="#333"/></svg><span class="P">Student<b>▾</b></span><span class="ri">‹</span></div><svg class="sr" width="6" height="6"><circle cx="2.5" cy="2.5" r="2" fill="none" stroke="#bbb" stroke-width=".8"/><path d="M4 4l2 2" stroke="#bbb"/></svg><div class="tr"></div><div class="sb"></div>
   <div class="L"><div class="i s">Jennifer McJenniferFace</div><div class="i">Robert Roberwoods</div><div class="i">Alex Anderson</div><div class="i">Suzy McSuzyFace</div><div class="i">Shakira Shakira</div><div class="i">Jennifer McJenniferFace</div><div class="i">Robert Roberwoods</div><div class="i">Alex Anderson</div><div class="i">Suzy McSuzyFace</div><div class="i">Shakira Shakira</div><div class="i">Jennifer McJenniferFace</div><div class="i">Robert Roberwoods</div></div></div>
  <div class="C K"><span class="ch">›</span></div>
  <div class="C Q"><span class="pl">+</span></div>
 </div>
 <svg class="rd" width="577" height="326"><path d="M186 14L180 40" stroke="#ff7070" stroke-width=".8"/></svg>
</div>

<!-- FRAME 17 -->
<div class="F" style="left:2424px;top:1143px">
 <div class="W">
  <div class="C" style="width:150px"><div class="H"><svg class="fl" width="7" height="6"><path d="M0 .5h7M1.5 3h4M3 5.5h1" stroke="#333"/></svg><span class="P">Student<b>▾</b></span><span class="ri"><svg width="7" height="7"><path d="M.5 2.5v-2h2M4.5.5h2v2M6.5 4.5v2h-2M2.5 6.5h-2v-2" fill="none" stroke="#333"/></svg>‹</span></div><svg class="sr" width="6" height="6"><circle cx="2.5" cy="2.5" r="2" fill="none" stroke="#bbb" stroke-width=".8"/><path d="M4 4l2 2" stroke="#bbb"/></svg><div class="tr"></div><div class="sb"></div>
   <div class="L"><div class="i s">Jennifer McJenniferFace</div><div class="i">Robert Roberwoods</div><div class="i">Alex Anderson</div><div class="i">Suzy McSuzyFace</div><div class="i">Shakira Shakira</div><div class="i">Jennifer McJenniferFace</div><div class="i">Robert Roberwoods</div><div class="i">Alex Anderson</div><div class="i">Suzy McSuzyFace</div><div class="i">Shakira Shakira</div><div class="i">Jennifer McJenniferFace</div><div class="i">Robert Roberwoods</div></div></div>
  <div class="C K"><span class="ch">›</span></div>
  <div class="C" style="width:220px"><div class="H"><svg class="fl" width="7" height="6"><path d="M0 .5h7M1.5 3h4M3 5.5h1" stroke="#333"/></svg><span class="P">Submissions<b>▾</b></span><span class="ri"><svg width="7" height="7"><path d="M.5 2.5v-2h2M4.5.5h2v2M6.5 4.5v2h-2M2.5 6.5h-2v-2" fill="none" stroke="#333"/></svg>‹</span></div><div class="tr"></div><div class="sb"></div><div class="sp"></div>
   <div class="D" style="left:16px"><div class="t">Define: How Might We...?</div><div class="d1"><svg width="7" height="9"><rect width="7" height="9" rx="1" fill="#333"/><path d="M1.5 3h4M1.5 5h4M1.5 7h4" stroke="#fff" stroke-width=".7"/></svg></div><div class="d2"><svg width="8" height="9"><path d="M0 0h8v7H2L0 9z" fill="#222"/><text x="2.5" y="5.5" font-size="5" fill="#fff" font-family="Liberation Sans">2</text></svg></div><i class="av"></i><div class="nm">Jennifer McJenniferFace</div><div class="gr">Grade: __ / __</div><div class="cr">Created on: 9/25/2020, 5:21pm<br>Edited on: 9/26/2020, 9:00am</div><div class="bt">How might we blah blah blah, blah, blah blah blah, blah blah blah, blah blah blah, blah blah blah, blah blah blah....</div><div class="lk">how-might-we.doc</div><div class="rl"></div><div class="ic"><svg width="40" height="9"><path d="M0 9l1-3 5-5 2 2-5 5z" fill="#222"/><circle cx="13" cy="4.5" r="4" fill="#222"/><circle cx="12" cy="3" r="1" fill="#fff"/><path d="M19.5 1.5v7h7v-3M24 .5h3v3M27 .5l-4 4" fill="none" stroke="#222"/><path d="M33 0v5M30.5 3l2.5 3 2.5-3M30 8.5h6" fill="none" stroke="#222" stroke-width="1.3"/></svg></div><div class="t t2">Define: How Might We...?</div><div class="d1" style="top:240px"><svg width="7" height="9"><rect width="7" height="9" rx="1" fill="#333"/></svg></div><div class="d2" style="top:240px"><svg width="8" height="9"><path d="M0 0h8v7H2L0 9z" fill="#222"/></svg></div></div></div>
  <div class="C Q"><span class="pl">+</span></div>
 </div>
 <svg class="rd" width="577" height="326"><path d="M184 10L179 38M405 11L400 40M356 49L351 77M376 49L370 77" stroke="#ff7070" stroke-width=".8"/></svg>
</div>

<!-- FRAME 18 -->
<div class="F" style="left:1826px;top:1495px">
 <div class="W">
  <div class="C" style="width:150px"><div class="H"><span class="P">Student<b>▾</b></span><span class="ri">‹</span></div><div class="tr"></div><div class="sb"></div>
   <div class="L"><div class="i s">Jennifer McJenniferFace</div><div class="i">Robert Roberwoods</div><div class="i">Alex Anderson</div><div class="i">Suzy McSuzyFace</div><div class="i">Shakira Shakira</div><div class="i">Jennifer McJenniferFace</div><div class="i">Robert Roberwoods</div><div class="i">Alex Anderson</div><div class="i">Suzy McSuzyFace</div><div class="i">Shakira Shakira</div><div class="i">Jennifer McJenniferFace</div><div class="i">Robert Roberwoods</div></div></div>
  <div class="C K"><span class="ch">›</span></div>
  <div class="C K"><span class="ch">›</span></div>
  <div class="C Q"><span class="pl">+</span></div>
 </div>
 <svg class="rd" width="577" height="326"><path d="M186 12L180 41M199 12L194 41" stroke="#ff7070" stroke-width=".8"/></svg>
</div>

<!-- FRAME 20 -->
<div class="F" style="left:2424px;top:1495px">
 <div class="W">
  <div class="C" style="width:150px"><div class="H"><svg class="fl" width="7" height="6"><path d="M0 .5h7M1.5 3h4M3 5.5h1" stroke="#333"/></svg><span class="P">Student<b>▾</b></span><span class="ri">‹</span></div><svg class="sr" width="6" height="6"><circle cx="2.5" cy="2.5" r="2" fill="none" stroke="#bbb" stroke-width=".8"/><path d="M4 4l2 2" stroke="#bbb"/></svg><div class="tr"></div><div class="sb"></div>
   <div class="L"><div class="i s">Jennifer McJenniferFace</div><div class="i">Robert Roberwoods</div><div class="i">Alex Anderson</div><div class="i">Suzy McSuzyFace</div><div class="i">Shakira Shakira</div><div class="i">Jennifer McJenniferFace</div><div class="i">Robert Roberwoods</div><div class="i">Alex Anderson</div><div class="i">Suzy McSuzyFace</div><div class="i">Shakira Shakira</div><div class="i">Jennifer McJenniferFace</div><div class="i">Robert Roberwoods</div></div></div>
  <div class="C" style="width:162px"><div class="H"><svg class="fl" width="7" height="6"><path d="M0 .5h7M1.5 3h4M3 5.5h1" stroke="#333"/></svg><span class="P">Project<b>▾</b></span><span class="ri"><svg width="7" height="7"><path d="M.5 2.5v-2h2M4.5.5h2v2M6.5 4.5v2h-2M2.5 6.5h-2v-2" fill="none" stroke="#333"/></svg>‹</span></div><svg class="sr" width="6" height="6"><circle cx="2.5" cy="2.5" r="2" fill="none" stroke="#bbb" stroke-width=".8"/><path d="M4 4l2 2" stroke="#bbb"/></svg>
   <div class="L p"><div class="i s">Ritual Project</div><div class="i">Hypertext Narrative Project</div><div class="i">Open Design Project</div></div></div>
  <div class="C K"><span class="ch">›</span></div>
  <div class="C Q"><span class="pl">+</span></div>
 </div>
 <svg class="rd" width="577" height="326"><path d="M333 12L328 41M350 12L345 41" stroke="#ff7070" stroke-width=".8"/></svg>
</div>

<!-- FRAME 2 -->
<div class="F" style="left:34px;top:1122px">
 <div style="position:absolute;left:16px;top:35px;width:531px;height:248px;border:1px solid #ccc">
  <div style="position:absolute;left:12px;top:0;bottom:0;width:1px;background:#ddd"></div>
  <div style="position:absolute;left:24px;top:0;bottom:0;width:1px;background:#ddd"></div>
  <span class="ch" style="left:3px;top:2px">›</span><span class="ch" style="left:16px;top:2px">›</span>
  <div style="position:absolute;left:28px;top:2px;width:93px;height:15px;border:1px solid #ccc;font-size:8px;line-height:13px;color:#999;padding-left:22px;white-space:nowrap"><svg style="position:absolute;left:4px;top:4px" width="7" height="6"><path d="M0 .5h7M1.5 3h4M3 5.5h1" stroke="#333"/></svg>Submissions <b style="color:#333;font-size:6px;font-weight:normal;margin-left:4px">▾</b></div>
  <svg style="position:absolute;left:510px;top:7px" width="7" height="7"><path d="M.5 2.5v-2h2M4.5.5h2v2M6.5 4.5v2h-2M2.5 6.5h-2v-2" fill="none" stroke="#333"/></svg>
 </div>
 <div style="position:absolute;left:36px;top:65px;width:516px;height:223px;border:1px solid #999;box-shadow:0 1px 3px rgba(0,0,0,.35);background:#fff;overflow:hidden">
  <div class="gy" style="left:0;width:163px"></div>
  <div class="gy" style="left:345px;width:171px"></div>
  <div class="vb" style="left:155px;top:8px;height:128px"></div>
  <div class="vb" style="left:503px;top:13px;height:130px"></div>
  <svg style="position:absolute;left:44px;top:12px" width="7" height="10"><rect y="1" width="7" height="9" rx="1" fill="#333"/><rect x="2" width="3" height="2" fill="#333"/></svg>
  <div style="position:absolute;left:54px;top:11px;font-size:9px;font-weight:bold;color:#333">Assignment</div>
  <div class="ph" style="left:14px;top:40px;width:132px;height:50px"><svg viewBox="0 0 100 100" preserveAspectRatio="none"><path d="M0 0L100 100M100 0L0 100" stroke="#ddd" vector-effect="non-scaling-stroke" fill="none"/></svg></div>
  <p class="lo" style="left:14px;top:98px;width:110px;font-size:4.8px;line-height:6.6px">Lorem ipsum dolor sit amet, consectetur adipiscing elit, sed do eiusmod tempor incididunt ut labore et dolore magna aliqua. Ut enim ad minim veniam, quis nostrud exercitation ullamco laboris nisi ut aliquip ex ea commodo consequat. Duis aute irure dolor in reprehenderit in voluptate velit esse cillum dolore eu fugiat nulla pariatur. Excepteur sint occaecat cupidatat non proident, sunt in culpa qui officia deserunt mollit anim id est laborum.</p>
  <p class="lo" style="left:14px;top:182px;width:110px;font-size:4.8px;line-height:6.6px">Lorem ipsum dolor sit amet, consectetur adipiscing elit, sed do eiusmod tempor incididunt ut labore et dolore magna aliqua. Ut enim ad minim veniam, quis nostrud exercitation ullamco laboris nisi ut aliquip ex ea commodo consequat. Duis aute irure</p>
  <div class="D" style="left:187px;top:-34px"><div class="t">Define: How Might We...?</div><div class="d1"><svg width="7" height="9"><rect width="7" height="9" rx="1" fill="#333"/><path d="M1.5 3h4M1.5 5h4M1.5 7h4" stroke="#fff" stroke-width=".7"/></svg></div><i class="av"></i><div class="nm">Jennifer McJenniferFace</div><div class="gr">Grade: __ / __</div><div class="cr">Created on: 9/25/2020, 5:21pm<br>Edited on: 9/26/2020, 9:00am</div><div class="bt">How might we blah blah blah, blah, blah blah blah, blah blah blah, blah blah blah, blah blah blah, blah blah blah....</div><div class="lk">how-might-we.doc</div><div class="rl"></div><div class="ic"><svg width="40" height="9"><path d="M0 9l1-3 5-5 2 2-5 5z" fill="#222"/><circle cx="13" cy="4.5" r="4" fill="#222"/><circle cx="12" cy="3" r="1" fill="#fff"/><path d="M19.5 1.5v7h7v-3M24 .5h3v3M27 .5l-4 4" fill="none" stroke="#222"/><path d="M33 0v5M30.5 3l2.5 3 2.5-3M30 8.5h6" fill="none" stroke="#222" stroke-width="1.3"/></svg></div></div>
  <svg style="position:absolute;left:393px;top:12px" width="9" height="9"><path d="M0 0h9v8H0z" fill="#222"/><text x="3" y="6" font-size="5" fill="#fff" font-family="Liberation Sans">4</text></svg>
  <div style="position:absolute;left:404px;top:11px;font-size:9px;font-weight:bold;color:#333">Comments</div>
  <div class="cd" style="left:355px;top:34px;width:139px;height:67px"><i class="cc" style="left:5px;top:5px"></i><b class="cn" style="left:27px;top:6px;font-size:5px">Joey Joefacemcgee</b><span class="cp" style="left:27px;top:12px;font-size:3.5px">Posted on 9/26/2020</span><p class="cx" style="left:27px;right:8px;top:19px;font-size:4.6px;line-height:6.5px;height:33px">Lorem ipsum dolor sit amet, consectetur adipiscing elit, sed do eiusmod tempor incididunt ut labore et dolore magna aliqua. Ut enim ad minim veniam, quis nostrud exercitation ullamco laboris nisi ut</p><span class="rp" style="font-size:4.6px;bottom:4px">Reply</span></div>
  <div class="cd" style="left:355px;top:108px;width:139px;height:68px"><i class="cc" style="left:5px;top:5px"></i><b class="cn" style="left:27px;top:6px;font-size:5px">Joey Joefacemcgee</b><span class="cp" style="left:27px;top:12px;font-size:3.5px">Posted on 9/26/2020</span><p class="cx" style="left:27px;right:8px;top:19px;font-size:4.6px;line-height:6.5px;height:33px">Lorem ipsum dolor sit amet, consectetur adipiscing elit, sed do eiusmod tempor incididunt ut labore et dolore magna aliqua. Ut enim ad minim veniam, quis nostrud exercitation ullamco laboris nisi ut</p><span class="rp" style="font-size:4.6px;bottom:4px">Reply</span></div>
  <div class="cd" style="left:355px;top:184px;width:139px;height:50px"><i class="cc" style="left:5px;top:5px"></i><b class="cn" style="left:27px;top:6px;font-size:5px">Joey Joefacemcgee</b><span class="cp" style="left:27px;top:12px;font-size:3.5px">Posted on 9/26/2020</span><p class="cx" style="left:27px;right:8px;top:19px;font-size:4.6px;line-height:6.5px;height:33px">Lorem ipsum dolor sit amet, consectetur adipiscing elit, sed do eiusmod tempor incididunt ut labore</p></div>
 </div>
 <div class="an" style="left:244px;top:5px;font-size:5.8px;line-height:7.2px"><b>"Pop Up" Multi-Panel.</b><br>Submissions with Features like comments and<br>assignment descriptions get a special viewer.<br>This is not quite a modal, not quite inline. Visually<br>lifts the assignment and related panels.</div>
 <svg class="rd" width="577" height="326"><path d="M236 16L186 64" stroke="#ff7070" stroke-width=".8"/></svg>
</div>

</body></html>
